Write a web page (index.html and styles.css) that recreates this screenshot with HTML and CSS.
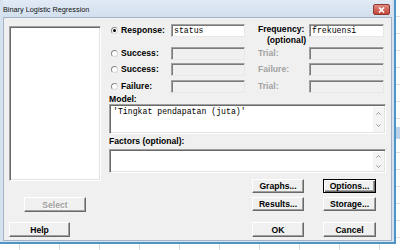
FILE: index.html
```html
<!DOCTYPE html>
<html lang="en">
<head>
    <meta charset="UTF-8">
    <title>Binary Logistic Regression</title>
    <link rel="stylesheet" href="styles.css">
</head>
<body>

<div class="window">
    <div class="titlebar">
        <span class="title">Binary Logistic Regression</span>
        <span class="close">
            <svg width="7" height="6" viewBox="0 0 7 6"><path d="M1 0.5 L6 5.5 M6 0.5 L1 5.5" stroke="#fff" stroke-width="1.6"/></svg>
        </span>
    </div>

    <div class="client">
        <div class="left">
            <div class="listbox"></div>
            <div class="btn select disabled">Select</div>
            <div class="btn help">Help</div>
        </div>

        <div class="right">
            <div class="form">
                <span class="radio checked"></span>
                <span class="label">Response:</span>
                <div class="field on">status</div>
                <span></span>
                <span class="label freq">Frequency:<br><span class="opt">(optional)</span></span>
                <div class="field on">frekuensi</div>

                <span class="radio"></span>
                <span class="label">Success:</span>
                <div class="field"></div>
                <span></span>
                <span class="label off">Trial:</span>
                <div class="field"></div>

                <span class="radio"></span>
                <span class="label">Success:</span>
                <div class="field"></div>
                <span></span>
                <span class="label off">Failure:</span>
                <div class="field"></div>

                <span class="radio"></span>
                <span class="label">Failure:</span>
                <div class="field"></div>
                <span></span>
                <span class="label off">Trial:</span>
                <div class="field"></div>
            </div>

            <div class="label caption model-cap">Model:</div>
            <div class="area model-area">
                <div class="text">'Tingkat pendapatan (juta)'</div>
                <div class="scroll">
                    <span><svg width="5" height="3" viewBox="0 0 5 3"><path d="M0.5 2.5 L2.5 0.5 L4.5 2.5" fill="none" stroke="#9a9a9a"/></svg></span>
                    <span><svg width="5" height="3" viewBox="0 0 5 3"><path d="M0.5 0.5 L2.5 2.5 L4.5 0.5" fill="none" stroke="#9a9a9a"/></svg></span>
                </div>
            </div>

            <div class="label caption factors-cap">Factors (optional):</div>
            <div class="area factors-area">
                <div class="text"></div>
                <div class="scroll">
                    <span><svg width="5" height="3" viewBox="0 0 5 3"><path d="M0.5 2.5 L2.5 0.5 L4.5 2.5" fill="none" stroke="#9a9a9a"/></svg></span>
                    <span><svg width="5" height="3" viewBox="0 0 5 3"><path d="M0.5 0.5 L2.5 2.5 L4.5 0.5" fill="none" stroke="#9a9a9a"/></svg></span>
                </div>
            </div>

            <div class="buttons">
                <div class="btn">Graphs...</div>
                <div class="btn default">Options...</div>
                <div class="btn">Results...</div>
                <div class="btn">Storage...</div>
                <div class="btn last">OK</div>
                <div class="btn last">Cancel</div>
            </div>
        </div>
    </div>
</div>

</body>
</html>
```

FILE: styles.css
```css
body {
    margin: 0;
    width: 400px;
    height: 250px;
    overflow: hidden;
    font-family: "Liberation Sans", Arial, sans-serif;
    background-color: #fff;
    /* worksheet behind the dialog */
    background-image:
        linear-gradient(to bottom, transparent 127px, #bcd2ea 127px, #bcd2ea 139px, transparent 139px),
        repeating-linear-gradient(to right, transparent 0, transparent 19px, #d9dcdf 19px, #d9dcdf 20px, transparent 20px, transparent 40px),
        repeating-linear-gradient(to bottom, transparent 0, transparent 16px, #dde0e3 16px, #dde0e3 17px);
}

.window {
    width: 396px;
    height: 244px;
    box-sizing: border-box;
    padding: 0 2px 1px 3px;
    background-color: #d6e2f0;
    border-right: 2px solid #4f95c4;
    border-bottom: 2px solid #4f95c4;
    display: flex;
    flex-direction: column;
}

.titlebar {
    height: 17px;
    flex-shrink: 0;
    display: flex;
    align-items: center;
    justify-content: space-between;
    background: linear-gradient(to bottom, #e1eaf5, #d3dfee);
}

.title {
    font-size: 7.3px;
    color: #111;
    padding-top: 2px;
}

.close {
    width: 17px;
    height: 11px;
    margin-right: 2px;
    margin-top: 2px;
    border: 1px solid #8e3a33;
    border-radius: 2px;
    box-sizing: border-box;
    background: linear-gradient(to bottom, #e08a7f, #c4473b);
    display: flex;
    justify-content: center;
    align-items: center;
}

.client {
    flex: 1;
    background-color: #f0f0f0;
    border: 1px solid #a4b3c6;
    display: flex;
    padding: 6px 0 0 5px;
}

.left {
    width: 92px;
    margin-top: 2px;
    display: flex;
    flex-direction: column;
}

.listbox {
    height: 155px;
    box-sizing: border-box;
    background-color: #fff;
    border: 1px solid;
    border-color: #a0a0a0 #fff #fff #a0a0a0;
    box-shadow: inset 1px 1px 0 #696969, inset -1px -1px 0 #e3e3e3;
}

/* push buttons */
.btn {
    height: 14px;
    box-sizing: border-box;
    display: flex;
    justify-content: center;
    align-items: center;
    font-size: 8.6px;
    font-weight: bold;
    color: #000;
    background-color: #f0f0f0;
    border: 1px solid;
    border-color: #fff #696969 #696969 #fff;
    box-shadow: inset -1px -1px 0 #a0a0a0;
}

.btn.select {
    width: 62px;
    height: 15px;
    margin: 16px 0 0 15px;
}

.btn.help {
    width: 61px;
    height: 15px;
    margin-top: 10px;
}

.btn.disabled {
    color: #a0a0a0;
    text-shadow: 1px 1px 0 #fff;
}

.btn.default {
    border-color: #000;
    box-shadow: inset 1px 1px 0 #fff, inset -1px -1px 0 #696969, inset -2px -2px 0 #a0a0a0;
}

.right {
    width: 277px;
    margin-left: 8px;
}

.form {
    display: grid;
    grid-template-columns: 12px 50px 74px 13px 51px 75px;
    grid-template-rows: 23px 16px 17px 13px;
    align-items: start;
}

.label {
    font-size: 8.6px;
    font-weight: bold;
    line-height: 13px;
    color: #000;
    white-space: nowrap;
}

.label.off {
    color: #a3a3a3;
}

.label.freq {
    line-height: 11px;
}

.opt {
    padding-left: 9px;
}

.radio {
    width: 7px;
    height: 7px;
    margin: 3px 0 0 2px;
    box-sizing: border-box;
    border-radius: 50%;
    border: 1px solid #8a8a8a;
    border-right-color: #d8d8d8;
    border-bottom-color: #d8d8d8;
    background-color: #fff;
    display: flex;
    justify-content: center;
    align-items: center;
}

.radio.checked::after {
    content: "";
    width: 3px;
    height: 3px;
    border-radius: 50%;
    background-color: #000;
}

.field {
    height: 13px;
    box-sizing: border-box;
    border: 1px solid;
    border-color: #a0a0a0 #e8e8e8 #e8e8e8 #a0a0a0;
    box-shadow: inset 1px 1px 0 #7a7a7a;
    background-color: #f0f0f0;
    font-family: "Liberation Mono", "Courier New", monospace;
    font-size: 8.2px;
    line-height: 11px;
    padding-left: 2px;
}

.field.on {
    background-color: #fff;
}

.caption {
    line-height: 10px;
}

.model-cap {
    margin-top: 1px;
}

.factors-cap {
    margin-top: 2px;
    line-height: 11px;
}

.area {
    box-sizing: border-box;
    display: flex;
    background-color: #fff;
    border: 1px solid;
    border-color: #a0a0a0 #fff #fff #a0a0a0;
    box-shadow: inset 1px 1px 0 #696969, inset -1px -1px 0 #e3e3e3;
    padding: 2px 1px 1px 2px;
}

.model-area {
    height: 30px;
}

.factors-area {
    height: 24px;
    margin-top: 2px;
}

.area .text {
    flex: 1;
    font-family: "Liberation Mono", "Courier New", monospace;
    font-size: 8.2px;
    line-height: 10px;
    padding-left: 1px;
}

.scroll {
    width: 11px;
    display: flex;
    flex-direction: column;
    background-color: #f4f4f4;
}

.scroll span {
    flex: 1;
    display: flex;
    justify-content: center;
    align-items: center;
}

.buttons {
    display: grid;
    grid-template-columns: 52px 53px;
    grid-template-rows: 14px 14px 15px;
    column-gap: 19px;
    row-gap: 4px;
    justify-content: end;
    margin: 6px 10px 0 0;
}

.buttons .last {
    height: 15px;
    margin-top: 7px;
}
```
